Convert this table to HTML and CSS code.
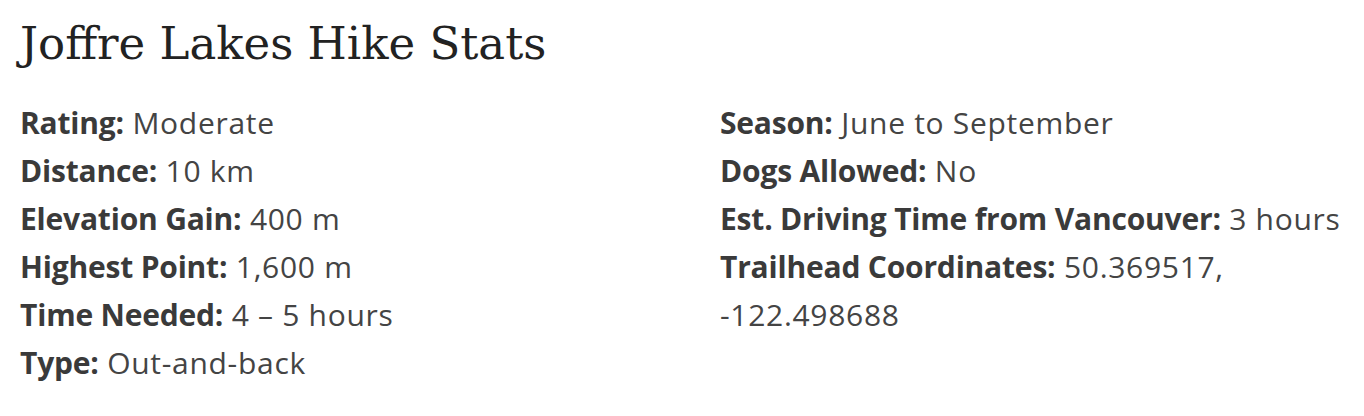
FILE: index.html
```html
<!DOCTYPE html>
<html lang="en">
<head>
<meta charset="utf-8">
<title>Joffre Lakes Hike Stats</title>
<link rel="stylesheet" href="styles.css">
</head>
<body>
<section class="stats">
  <h1 class="stats-title">Joffre Lakes Hike Stats</h1>
  <div class="stats-grid">
    <ul class="stats-col">
      <li><strong>Rating:</strong> Moderate</li>
      <li><strong>Distance:</strong> 10 km</li>
      <li><strong>Elevation Gain:</strong> 400 m</li>
      <li><strong>Highest Point:</strong> 1,600 m</li>
      <li><strong>Time Needed:</strong> 4 – 5 hours</li>
      <li><strong>Type:</strong> Out-and-back</li>
    </ul>
    <ul class="stats-col">
      <li><strong>Season:</strong> June to September</li>
      <li><strong>Dogs Allowed:</strong> No</li>
      <li><strong>Est. Driving Time from Vancouver:</strong> 3 hours</li>
      <li><strong>Trailhead Coordinates:</strong> <span class="coord">50.369517,</span> <span class="coord">-122.498688</span></li>
    </ul>
  </div>
</section>
</body>
</html>
```

FILE: styles.css
```css
html, body {
  margin: 0;
  padding: 0;
  background: #ffffff;
}

.stats {
  padding: 0 20px;
}

.stats-title {
  margin: 0;
  padding-top: 16px;
  font-family: "DejaVu Serif", "Liberation Serif", serif;
  font-weight: 400;
  font-size: 45px;
  line-height: 56px;
  color: #222222;
}

.stats-grid {
  display: grid;
  grid-template-columns: 700px 624px;
  margin-top: 27px;
}

.stats-col {
  list-style: none;
  margin: 0;
  padding: 0;
  font-family: "Open Sans", "Noto Sans", sans-serif;
  font-size: 30px;
  letter-spacing: 0.7px;
  line-height: 48px;
  color: #444444;
}

.stats-col strong {
  font-weight: 700;
  letter-spacing: -0.2px;
  color: #3a3a3a;
}

.coord {
  white-space: nowrap;
}
```
